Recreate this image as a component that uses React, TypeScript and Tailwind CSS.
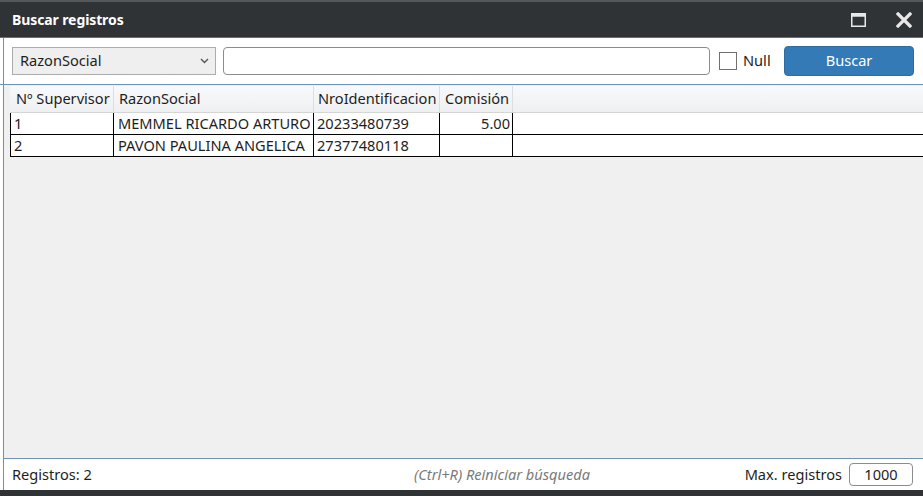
import React from 'react';

interface Supervisor {
  id: number;
  razonSocial: string;
  nroIdentificacion: string;
  comision: string;
}

const rows: Supervisor[] = [
  { id: 1, razonSocial: 'MEMMEL RICARDO ARTURO', nroIdentificacion: '20233480739', comision: '5.00' },
  { id: 2, razonSocial: 'PAVON PAULINA ANGELICA', nroIdentificacion: '27377480118', comision: '' },
];

const font = { fontFamily: '"Noto Sans", "Open Sans", sans-serif' };

const App: React.FC = () => {
  return (
    <div
      className="w-[923px] h-[496px] flex flex-col bg-white text-[14.6px] text-[#1e1e1e] overflow-hidden"
      style={font}
    >
      {/* title bar */}
      <div className="h-[38px] shrink-0 bg-[#303336] border-t-2 border-[#55585b] border-b border-b-[#6b6e71] flex items-center pl-[12px] pr-[11px]">
        <span className="text-white font-bold text-[14px] tracking-[-0.1px]">Buscar registros</span>
        <div className="ml-auto flex items-center gap-[30px]">
          <svg width="15" height="14" viewBox="0 0 15 14">
            <rect x="0.75" y="0.75" width="13.5" height="12.5" fill="none" stroke="#e8e8e8" strokeWidth="1.5" />
            <rect x="0.75" y="0.75" width="13.5" height="3" fill="#e8e8e8" />
          </svg>
          <svg width="16" height="16" viewBox="0 0 16 16">
            <path d="M2 2 L14 14 M14 2 L2 14" stroke="#e8e8e8" strokeWidth="3.2" strokeLinecap="square" />
          </svg>
        </div>
      </div>

      <div className="flex-1 flex flex-col border-l border-[#8a8a8a] ml-[3px] min-h-0">
        {/* toolbar */}
        <div className="h-[46px] shrink-0 flex items-center pl-[8px] pr-[9px]">
          <div className="w-[204px] h-[28px] border border-[#acacac] bg-[#efefef] flex items-center pl-[7px] pr-[6px]">
            <span>RazonSocial</span>
            <svg className="ml-auto" width="9" height="6" viewBox="0 0 9 6">
              <path d="M1 1 L4.5 4.5 L8 1" fill="none" stroke="#555" strokeWidth="1.4" />
            </svg>
          </div>
          <div className="ml-[7px] w-[487px] h-[28px] border border-[#8c8c8c] rounded-[4px] bg-white" />
          <div className="ml-[9px] w-[18px] h-[18px] border border-[#707070] bg-white" />
          <span className="ml-[6px]">Null</span>
          <button className="ml-auto w-[130px] h-[30px] rounded-[4px] bg-[#337ab7] border border-[#2e6da4] text-white text-[14.6px]">
            Buscar
          </button>
        </div>

        <div className="h-px bg-[#6f93b8] shrink-0 -ml-[4px]" />

        {/* grid */}
        <div className="flex-1 bg-[#f0f0f0] pl-[6px] pt-px min-h-0">
          <div className="flex h-[27px] bg-gradient-to-b from-[#f8f9fa] to-[#eef0f2] border-b border-[#d5d5d5]">
            <div className="w-[104px] pl-[6px] flex items-center border-r border-[#dedede]">Nº Supervisor</div>
            <div className="w-[200px] pl-[5px] flex items-center border-r border-[#dedede]">RazonSocial</div>
            <div className="w-[126px] pl-[4px] flex items-center border-r border-[#dedede]">NroIdentificacion</div>
            <div className="w-[73px] pl-[5px] flex items-center border-r border-[#dedede]">Comisión</div>
            <div className="flex-1" />
          </div>
          {rows.map((r) => (
            <div key={r.id} className="flex h-[22px] bg-white border-b border-black border-l">
              <div className="w-[103px] pl-[3px] flex items-center border-r border-black">{r.id}</div>
              <div className="w-[200px] pl-[4px] flex items-center border-r border-black">{r.razonSocial}</div>
              <div className="w-[126px] pl-[3px] flex items-center border-r border-black">{r.nroIdentificacion}</div>
              <div className="w-[73px] pr-[2px] flex items-center justify-end border-r border-black">{r.comision}</div>
              <div className="flex-1" />
            </div>
          ))}
        </div>

        <div className="h-px bg-[#6f93b8] shrink-0" />

        {/* footer */}
        <div className="h-[31px] shrink-0 flex items-center pl-[8px] pr-[10px]">
          <span className="w-[402px]">Registros: 2</span>
          <span className="italic text-[#7a7a7a]">(Ctrl+R) Reiniciar búsqueda</span>
          <span className="ml-auto">Max. registros</span>
          <div className="ml-[7px] w-[64px] h-[23px] border border-[#8c8c8c] rounded-[4px] flex items-center justify-center">
            1000
          </div>
        </div>
      </div>

      <div className="h-[6px] shrink-0 bg-[#303336]" />
    </div>
  );
};

export default App;
